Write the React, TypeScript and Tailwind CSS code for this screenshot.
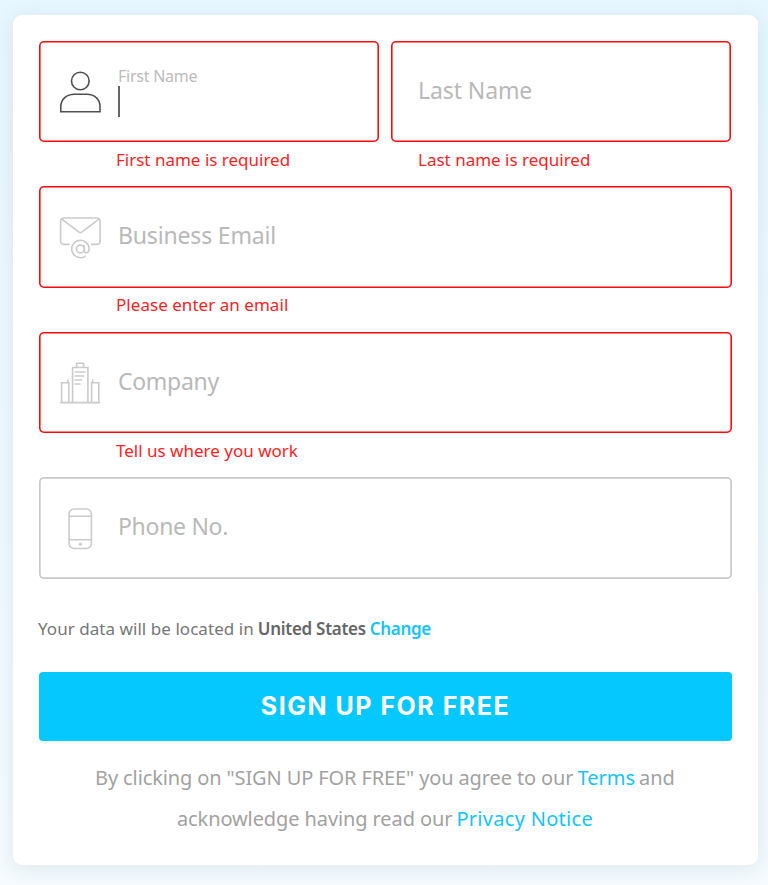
import type { ReactNode } from 'react';

const red = 'shadow-[inset_0_0_0_1.6px_#ff0808]';
const gray = 'shadow-[inset_0_0_0_1.7px_#c9c9c9]';
const link = 'text-[#12c4ff]';

function UserIcon() {
  return (
    <svg width="42" height="42" viewBox="0 0 42 42" fill="none" stroke="#505050" strokeWidth="1.6">
      <circle cx="20.3" cy="10" r="8.8" />
      <path d="M.8 40.7V35.5C.8 28 6.8 23.2 14.3 23.2H26.9C34.4 23.2 40 28 40 35.5V40.7Z" />
    </svg>
  );
}

function MailIcon() {
  return (
    <svg width="42" height="42" viewBox="0.4 0 42 42" fill="none" stroke="#cbcbcb" strokeWidth="1.6" strokeLinecap="round" strokeLinejoin="round" overflow="visible">
      <path d="M9.5 27.4H4.5Q1 27.4 1 23.9V4.5Q1 1 4.5 1H37Q40.5 1 40.5 4.5V23.9Q40.5 27.4 37 27.4H32" />
      <path d="M2.2 2.2L18.8 14.7Q20.8 16.2 22.8 14.7L39.3 2.2" />
      <circle cx="20.8" cy="32" r="3.9" />
      <path d="M24.7 28.6V33.3C24.7 37 29.5 36.5 29.5 32A8.7 8.7 0 1 0 25.5 39.3" />
    </svg>
  );
}

function BuildingIcon() {
  return (
    <svg width="42" height="42" viewBox="0.4 0 42 42" fill="none" stroke="#cbcbcb" strokeWidth="1.6" overflow="visible">
      <path d="M.5 40.6H40.5M13 40.5V5.5H28.3V40.5M17 5.2V1.3H24V5.2M2 40.5V20.8H9.2V40.5M32 40.5V20.8H39.2V40.5M8.2 20.5V17.5M33 20.5V17.5" />
      <path d="M15.5 10H25.5M15.5 14H24M15.5 18H22M15.5 22H20.5" strokeLinecap="round" />
    </svg>
  );
}

function PhoneIcon() {
  return (
    <svg width="42" height="42" viewBox="0.4 0 42 42" fill="none" stroke="#cbcbcb" strokeWidth="1.6">
      <rect x="9.5" y="1" width="22.3" height="39.5" rx="5" />
      <path d="M9.5 8.2H31.8M9.5 31.8H31.8" />
      <circle cx="20.8" cy="36.2" r="1.6" fill="#cbcbcb" stroke="none" />
    </svg>
  );
}

function Field({ icon, border, className, children }: { icon?: ReactNode; border: string; className: string; children: ReactNode }) {
  return (
    <div className={`flex h-[101.5px] items-center rounded-[5px] ${border} ${className}`}>
      {icon && <span className="mt-[2px]">{icon}</span>}
      {children}
    </div>
  );
}

function Row({ icon, label, spacing, error, errorSpacing }: { icon: ReactNode; label: string; spacing: string; error?: string; errorSpacing?: string }) {
  return (
    <div className="h-[145.5px]">
      <Field icon={icon} border={error ? red : gray} className="w-[693.4px] gap-[16.5px] pl-[20.5px]">
        <span className={`-mt-[3px] whitespace-nowrap text-[23px] leading-8 text-[#b9b9b9] ${spacing}`}>{label}</span>
      </Field>
      {error && (
        <p className={`ml-[77px] mt-[5.5px] whitespace-nowrap text-[17px] leading-6 text-[#fb221c] ${errorSpacing}`}>{error}</p>
      )}
    </div>
  );
}

export default function App() {
  return (
    <main className="h-[885px] w-[768px] overflow-hidden bg-gradient-to-b from-[#e7f7ff] to-[#f5fbff] pl-[13px] pt-[15px] font-['Noto_Sans',sans-serif]">
      <section className="h-[850px] w-[745px] rounded-[9px] bg-white pl-[26px] pt-[25.5px] shadow-[0_3px_20px_rgba(60,90,110,0.13)]">
        <div className="flex h-[145.5px] gap-[12px]">
          <div>
            <Field icon={<UserIcon />} border={red} className="w-[340px] gap-[16.5px] pl-[20.5px]">
              <div className="h-[53px] pt-[2px]">
                <span className="block whitespace-nowrap text-[16px] leading-[18px] tracking-[-0.25px] text-[#bcbcbc]">First Name</span>
                <i className="mt-px block h-[31px] w-[2px] bg-[#666]" />
              </div>
            </Field>
            <p className="ml-[77px] mt-[5.5px] whitespace-nowrap text-[17px] leading-6 text-[#fb221c]">First name is required</p>
          </div>
          <div>
            <Field border={red} className="w-[340px] pl-[27px]">
              <span className="-mt-[3px] whitespace-nowrap text-[23px] leading-8 tracking-[-0.1px] text-[#b9b9b9]">Last Name</span>
            </Field>
            <p className="ml-[27px] mt-[5.5px] whitespace-nowrap text-[17px] leading-6 text-[#fb221c]">Last name is required</p>
          </div>
        </div>
        <Row icon={<MailIcon />} label="Business Email" spacing="tracking-[-0.17px]" error="Please enter an email" errorSpacing="tracking-[0.04px]" />
        <Row icon={<BuildingIcon />} label="Company" spacing="tracking-[-0.3px]" error="Tell us where you work" errorSpacing="tracking-normal" />
        <Row icon={<PhoneIcon />} label="Phone No." spacing="tracking-[-0.3px]" />
        <div className="-ml-px flex h-[49px] items-start gap-[4px] whitespace-nowrap text-[17px] leading-6 text-[#777]">
          <span className="-mt-[6px] tracking-[0.05px]">Your data will be located in</span>
          <b className="-mt-[6px] font-semibold tracking-[-0.28px] text-[#666]">United States</b>
          <a className={`-mt-[6px] font-semibold tracking-[-0.35px] ${link}`}>Change</a>
        </div>
        <button className="flex h-[69px] w-[693px] items-center justify-center rounded-[4px] bg-[#05c8ff] font-['Inter',sans-serif] text-[25px] font-bold tracking-[1.5px] text-white">
          <span className="mt-px">SIGN UP FOR FREE</span>
        </button>
        <div className="mt-[16px] w-[692px] text-[20px] leading-[41px] text-[#a2a2a2]">
          <p className="flex justify-center gap-[4px] whitespace-nowrap">
            <span className="tracking-[-0.12px]">By clicking on "SIGN UP FOR FREE" you agree to our</span>
            <a className={link}>Terms</a>
            <span>and</span>
          </p>
          <p className="flex justify-center gap-[4px] whitespace-nowrap">
            <span className="tracking-[-0.1px]">acknowledge having read our</span>
            <a className={`tracking-[0.3px] ${link}`}>Privacy Notice</a>
          </p>
        </div>
      </section>
    </main>
  );
}
